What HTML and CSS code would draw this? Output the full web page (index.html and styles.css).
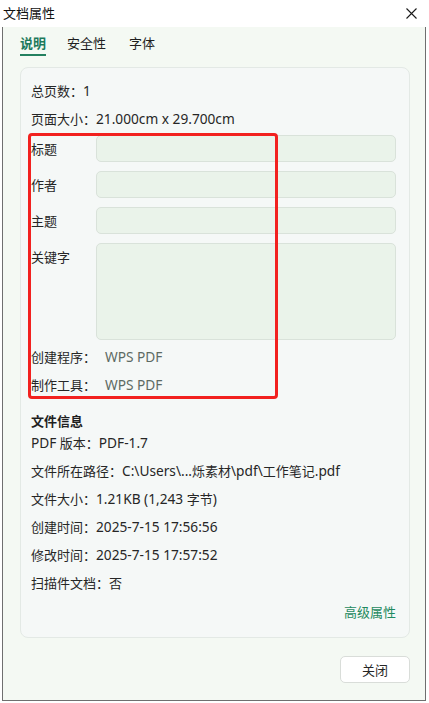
FILE: index.html
```html
<!DOCTYPE html>
<html lang="zh-CN">
<head>
<meta charset="utf-8">
<title>文档属性</title>
<link rel="stylesheet" href="styles.css">
</head>
<body>
<div class="window">
  <div class="titlebar">
    <span class="title">文档属性</span>
    <svg class="close-x" width="11" height="11" viewBox="0 0 11 11"><path d="M0.5 0.5 L10.5 10.5 M10.5 0.5 L0.5 10.5" stroke="#1a1a1a" stroke-width="1.1" fill="none"/></svg>
  </div>
  <div class="dialog">
    <div class="tabs">
      <div class="tab active">说明</div>
      <div class="tab">安全性</div>
      <div class="tab">字体</div>
    </div>
    <div class="card">
      <div class="row">总页数：<span class="lat">1</span></div>
      <div class="row">页面大小：<span class="lat">21.000cm x 29.700cm</span></div>
      <div class="fields">
        <div class="field"><span class="flabel">标题</span><div class="input"></div></div>
        <div class="field"><span class="flabel">作者</span><div class="input"></div></div>
        <div class="field"><span class="flabel">主题</span><div class="input"></div></div>
        <div class="field"><span class="flabel">关键字</span><div class="input area"></div></div>
      </div>
      <div class="row kv"><span class="k">创建程序：</span><span class="v lat">WPS PDF</span></div>
      <div class="row kv"><span class="k">制作工具：</span><span class="v lat">WPS PDF</span></div>
      <div class="section">文件信息</div>
      <div class="row"><span class="lat">PDF</span> 版本：<span class="lat">PDF-1.7</span></div>
      <div class="row">文件所在路径：<span class="lat">C:\Users\...</span>烁素材<span class="lat">\pdf\</span>工作笔记<span class="lat">.pdf</span></div>
      <div class="row">文件大小：<span class="lat">1.21KB (1,243 </span>字节<span class="lat">)</span></div>
      <div class="row">创建时间：<span class="lat">2025-7-15 17:56:56</span></div>
      <div class="row">修改时间：<span class="lat">2025-7-15 17:57:52</span></div>
      <div class="row">扫描件文档：否</div>
      <div class="row advanced"><span class="link">高级属性</span></div>
      <div class="highlight"></div>
    </div>
    <div class="footer">
      <button class="btn">关闭</button>
    </div>
  </div>
</div>
</body>
</html>
```

FILE: styles.css
```css
* { box-sizing: border-box; }
html, body {
  margin: 0;
  padding: 0;
  background: #ffffff;
}
body {
  font-family: "Noto Sans", "Noto Sans CJK SC", sans-serif;
  font-size: 13px;
  color: #262626;
  width: 429px;
  height: 703px;
  overflow: hidden;
}
.lat {
  font-size: 13.7px;
}
.window {
  width: 426px;
}
.titlebar {
  height: 27px;
  background: #ffffff;
  display: flex;
  align-items: center;
  justify-content: space-between;
  padding: 0 9px 1px 3px;
}
.title {
  font-size: 13px;
  color: #111;
  line-height: 17px;
}
.close-x {
  display: block;
  margin-top: 1px;
}
.dialog {
  margin-left: 2px;
  background: #f4f9f3;
  border-left: 1px solid #6f6f6f;
  border-right: 1px solid #6f6f6f;
  border-bottom: 1px solid #6f6f6f;
  height: 674px;
  padding: 0 15px 0 17px;
}
.tabs {
  display: flex;
  gap: 21px;
  padding-top: 8px;
}
.tab {
  line-height: 17px;
  padding-bottom: 2px;
  border-bottom: 2px solid transparent;
  color: #1f1f1f;
}
.tab.active {
  color: #1d7a5c;
  font-weight: bold;
  border-bottom-color: #23805f;
}
.tabs .tab:nth-child(3) { margin-left: 2px; }
.card {
  position: relative;
  margin-top: 11px;
  background: #f5f8f7;
  border: 1px solid #e3e9e5;
  border-radius: 8px;
  height: 571px;
  padding: 9px 13px 0 10px;
}
.row {
  height: 28px;
  line-height: 28px;
  white-space: nowrap;
}
.fields {
  display: flex;
  flex-direction: column;
  gap: 9px;
  margin-top: 2px;
  margin-bottom: 3px;
}
.field {
  display: flex;
  align-items: flex-start;
}
.flabel {
  width: 65px;
  height: 27px;
  line-height: 29px;
  flex: none;
}
.input {
  flex: 1;
  height: 27px;
  background: #eaf3ea;
  border: 1px solid #d9e2da;
  border-radius: 5px;
}
.input.area {
  height: 97px;
}
.kv .k {
  display: inline-block;
  width: 74px;
}
.kv .v {
  color: #5d6a63;
}
.section {
  font-weight: bold;
  line-height: 16px;
  margin-top: 14px;
  color: #1f1f1f;
}
.advanced {
  margin-top: 1px;
  text-align: right;
}
.link {
  color: #1f8a60;
}
.highlight {
  position: absolute;
  left: 7px;
  top: 65px;
  width: 250px;
  height: 266px;
  border: 3px solid #f2211f;
  border-radius: 4px;
}
.footer {
  display: flex;
  justify-content: flex-end;
  margin-top: 18px;
}
.btn {
  width: 70px;
  height: 27px;
  background: #ffffff;
  border: 1px solid #d9ddd9;
  border-radius: 5px;
  font-family: inherit;
  font-size: 13px;
  color: #262626;
  padding: 0;
}
```
